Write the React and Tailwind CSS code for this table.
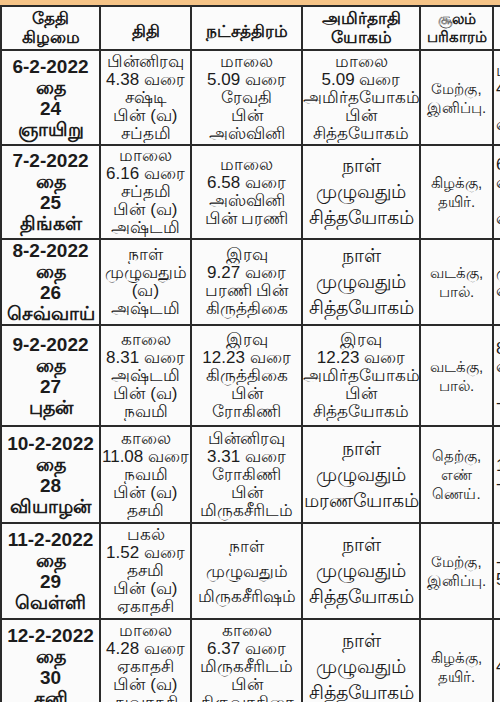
const rows = [
  {
    h: "h-[95px]",
    date: ["6-2-2022", "தை", "24", "ஞாயிறு"],
    thithi: ["பின்னிரவு", "4.38 வரை", "சஷ்டி", "பின் (வ)", "சப்தமி"],
    star: ["மாலை", "5.09 வரை", "ரேவதி", "பின்", "அஸ்வினி"],
    yogam: ["மாலை", "5.09 வரை", "அமிர்தயோகம்", "பின்", "சித்தயோகம்"],
    soolam: ["மேற்கு,", "இனிப்பு."],
    extra: ["பக", "4.", "", "வ"],
  },
  {
    h: "h-[94px]",
    date: ["7-2-2022", "தை", "25", "திங்கள்"],
    thithi: ["மாலை", "6.16 வரை", "சப்தமி", "பின் (வ)", "அஷ்டமி"],
    star: ["மாலை", "6.58 வரை", "அஸ்வினி", "பின் பரணி"],
    yogam: ["நாள்", "முழுவதும்", "சித்தயோகம்"],
    soolam: ["கிழக்கு,", "தயிர்."],
    extra: ["6", "வ", "", "வ"],
  },
  {
    h: "h-[86px]",
    date: ["8-2-2022", "தை", "26", "செவ்வாய்"],
    thithi: ["நாள்", "முழுவதும்", "(வ)", "அஷ்டமி"],
    star: ["இரவு", "9.27 வரை", "பரணி பின்", "கிருத்திகை"],
    yogam: ["நாள்", "முழுவதும்", "சித்தயோகம்"],
    soolam: ["வடக்கு,", "பால்."],
    extra: ["மு", "வ"],
  },
  {
    h: "h-[101px]",
    date: ["9-2-2022", "தை", "27", "புதன்"],
    thithi: ["காலை", "8.31 வரை", "அஷ்டமி", "பின் (வ)", "நவமி"],
    star: ["இரவு", "12.23 வரை", "கிருத்திகை", "பின்", "ரோகிணி"],
    yogam: ["இரவு", "12.23 வரை", "அமிர்தயோகம்", "பின்", "சித்தயோகம்"],
    soolam: ["வடக்கு,", "பால்."],
    extra: ["8", "வ", "", "-"],
  },
  {
    h: "h-[97px]",
    date: ["10-2-2022", "தை", "28", "வியாழன்"],
    thithi: ["காலை", "11.08 வரை", "நவமி", "பின் (வ)", "தசமி"],
    star: ["பின்னிரவு", "3.31 வரை", "ரோகிணி", "பின்", "மிருகசீரிடம்"],
    yogam: ["நாள்", "முழுவதும்", "மரணயோகம்"],
    soolam: ["தெற்கு,", "எண்", "ணெய்."],
    extra: ["1", "-"],
  },
  {
    h: "h-[96px]",
    date: ["11-2-2022", "தை", "29", "வெள்ளி"],
    thithi: ["பகல்", "1.52 வரை", "தசமி", "பின் (வ)", "ஏகாதசி"],
    star: ["நாள்", "முழுவதும்", "மிருகசீரிஷம்"],
    yogam: ["நாள்", "முழுவதும்", "சித்தயோகம்"],
    soolam: ["மேற்கு,", "இனிப்பு."],
    extra: ["-", "5"],
  },
  {
    h: "h-[96px]",
    date: ["12-2-2022", "தை", "30", "சனி"],
    thithi: ["மாலை", "4.28 வரை", "ஏகாதசி", "பின் (வ)", "துவாதசி"],
    star: ["காலை", "6.37 வரை", "மிருகசீரிடம்", "பின்", "திருவாதிரை"],
    yogam: ["நாள்", "முழுவதும்", "சித்தயோகம்"],
    soolam: ["கிழக்கு,", "தயிர்."],
    extra: ["4"],
  },
];

function Lines({ items, className }) {
  return (
    <div className={`flex flex-col items-center justify-center text-center ${className}`}>
      {items.map((t, i) => (
        <span key={i} className="whitespace-nowrap">
          {t || "\u00a0"}
        </span>
      ))}
    </div>
  );
}

const cell = "border-r-2 border-b-2 border-[#2a2a2a] overflow-hidden";

export default function App() {
  return (
    <div
      className="w-[500px] h-[702px] overflow-hidden bg-[#fbfbfb] text-[#1c1c1c]"
      style={{ fontFamily: '"Liberation Sans", "Noto Sans", sans-serif' }}
    >
      <div className="h-[5px] bg-[#f6c487]" />
      <div className="grid grid-cols-[99px_91px_111px_118px_73px_40px] border-t-2 border-l-2 border-[#2a2a2a] w-[534px]">
        {/* header */}
        <div className={`${cell} h-[44px] flex flex-col items-center justify-center text-[17px] font-bold leading-[19px]`}>
          <span>தேதி</span>
          <span>கிழமை</span>
        </div>
        <div className={`${cell} h-[44px] flex items-center justify-center text-[17px] font-bold pt-2`}>
          திதி
        </div>
        <div className={`${cell} h-[44px] flex items-center justify-center text-[17px] font-bold pt-2`}>
          நட்சத்திரம்
        </div>
        <div className={`${cell} h-[44px] flex flex-col items-center justify-center text-[17px] font-bold leading-[19px]`}>
          <span>அமிர்தாதி</span>
          <span>யோகம்</span>
        </div>
        <div className={`${cell} h-[44px] flex flex-col items-center justify-center text-[15px] font-bold leading-[18px]`}>
          <span>சூலம்</span>
          <span>பரிகாரம்</span>
        </div>
        <div className={`${cell} h-[44px]`} />

        {rows.map((r, i) => (
          <div key={i} className="contents">
            <Lines
              items={r.date}
              className={`${cell} ${r.h} text-[19px] font-bold leading-[21px]`}
            />
            <Lines items={r.thithi} className={`${cell} ${r.h} text-[17px] leading-[18px]`} />
            <Lines
              items={r.star}
              className={`${cell} ${r.h} text-[17px] ${r.star.length === 3 ? "leading-[25px]" : "leading-[18px]"}`}
            />
            <Lines
              items={r.yogam}
              className={`${cell} ${r.h} ${r.yogam.length === 3 ? "text-[19px] leading-[26px]" : "text-[17px] leading-[18px]"}`}
            />
            <Lines items={r.soolam} className={`${cell} ${r.h} text-[15px] leading-[19px]`} />
            <div className={`${cell} ${r.h} flex flex-col justify-center pl-[2px] text-[17px] leading-[18px]`}>
              {r.extra.map((t, j) => (
                <span key={j}>{t || "\u00a0"}</span>
              ))}
            </div>
          </div>
        ))}
      </div>
    </div>
  );
}
